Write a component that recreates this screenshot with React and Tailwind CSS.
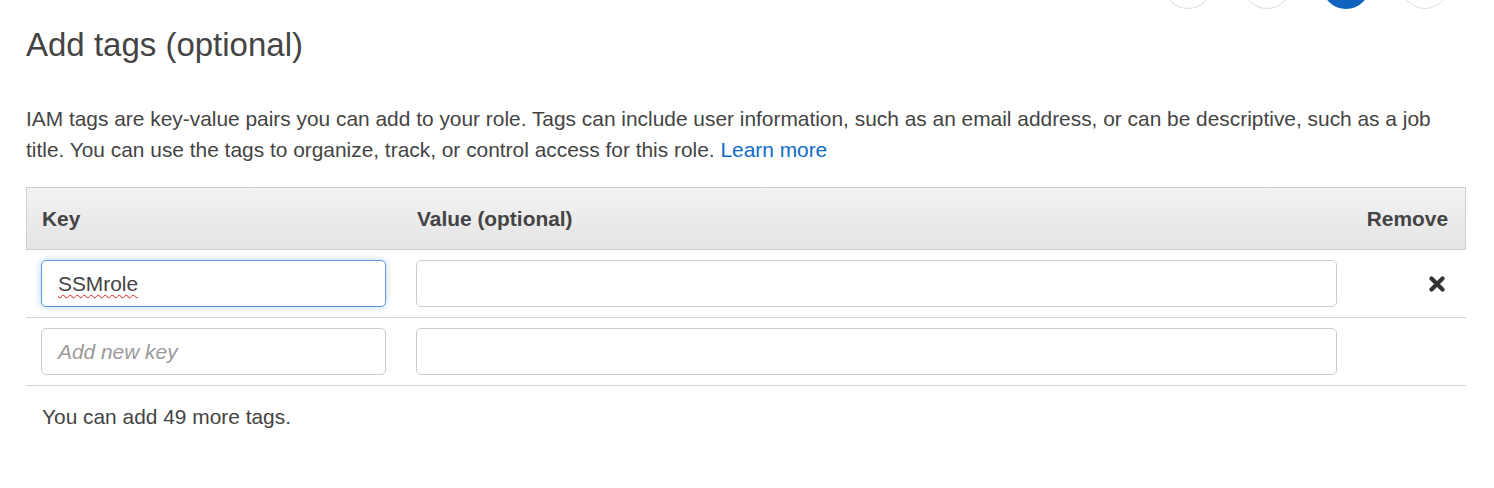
import React from "react";

const steps = [false, false, true, false];

const TagRow = ({ keyValue, focused }) => (
  <div className="grid grid-cols-[375px_951px_1fr] items-center h-[68px] border-b border-[#d5d5d5]">
    <div className="pl-[15px] pr-[15px]">
      {focused ? (
        <div className="h-[47px] rounded-[5px] border border-[#5a9be0] shadow-[0_0_6px_rgba(80,150,230,0.45)] bg-white flex items-center px-[16px]">
          <span className="underline decoration-wavy decoration-[#e02020] decoration-1 underline-offset-[3px]">
            {keyValue}
          </span>
        </div>
      ) : (
        <div className="h-[47px] rounded-[5px] border border-[#cccccc] bg-white flex items-center px-[16px]">
          <span className="italic text-[#9a9a9a]">Add new key</span>
        </div>
      )}
    </div>
    <div className="pl-[15px] pr-[15px]">
      <div className="h-[47px] rounded-[5px] border border-[#cccccc] bg-white" />
    </div>
    <div className="flex justify-end pr-[21px]">
      {focused && (
        <svg width="16" height="16" viewBox="0 0 16 16">
          <path d="M2.5 2.5 L13.5 13.5 M13.5 2.5 L2.5 13.5" stroke="#333" strokeWidth="4.2" strokeLinecap="round" />
        </svg>
      )}
    </div>
  </div>
);

const App = () => {
  return (
    <div className="w-[1494px] h-[488px] overflow-hidden bg-white text-[#444] font-['Liberation_Sans',Arial,sans-serif] text-[20.9px] leading-[31px]">
      <div className="h-[9px] flex justify-end items-end gap-[31px] pr-[45px]">
        {steps.map((active, i) => (
          <div
            key={i}
            className={
              active
                ? "shrink-0 w-[48px] h-[48px] rounded-full bg-[#0f63bd]"
                : "shrink-0 w-[48px] h-[48px] rounded-full border border-[#dddddd] bg-white"
            }
          />
        ))}
      </div>
      <div className="px-[26px] pr-[28px]">
        <h1 className="text-[33px] leading-[38px] mt-[17px] font-normal text-[#444]">Add tags (optional)</h1>
        <p className="mt-[39px]">
          IAM tags are key-value pairs you can add to your role. Tags can include user information, such as an email
          address, or can be descriptive, such as a job title. You can use the tags to organize, track, or control access
          for this role. <span className="text-[#0f6bc7]">Learn more</span>
        </p>
        <div className="mt-[22px]">
          <div className="grid grid-cols-[375px_951px_1fr] items-center h-[63px] border border-[#cfcfcf] bg-gradient-to-b from-[#f3f3f3] to-[#e4e4e4] font-bold text-[#444]">
            <div className="pl-[15px]">Key</div>
            <div className="pl-[15px]">Value (optional)</div>
            <div className="text-right pr-[17px]">Remove</div>
          </div>
          <TagRow keyValue="SSMrole" focused />
          <TagRow />
          <div className="pl-[16px] mt-[15px]">You can add 49 more tags.</div>
        </div>
      </div>
    </div>
  );
};

export default App;
